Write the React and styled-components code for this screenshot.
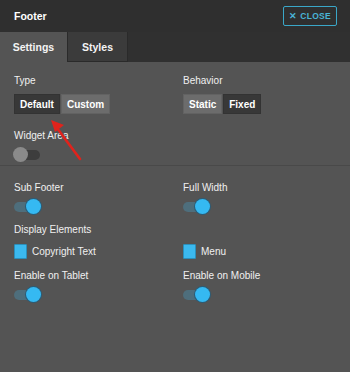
import styled, { createGlobalStyle } from 'styled-components'

const Global = createGlobalStyle`
  html, body { margin: 0; padding: 0; background: #545454; }
  body { font-family: "Liberation Sans", Arial, sans-serif; }
  * { box-sizing: border-box; }
`

const Toggle = ({ on }) => (
  <Track on={on}>
    <Knob on={on} />
  </Track>
)

const Check = ({ label }) => (
  <CheckRow>
    <Box />
    <span>{label}</span>
  </CheckRow>
)

export default () => (
  <Page>
    <Global />
    <Header>
      <Title>Footer</Title>
      <Close>✕ CLOSE</Close>
    </Header>
    <Tabs>
      <Tab active>Settings</Tab>
      <Tab>Styles</Tab>
    </Tabs>
    <Section>
      <Grid gap='16px'>
        <Field gap='7px'>
          <Label>Type</Label>
          <Group>
            <Seg dark>Default</Seg>
            <Seg>Custom</Seg>
          </Group>
        </Field>
        <Field gap='7px'>
          <Label>Behavior</Label>
          <Group>
            <Seg>Static</Seg>
            <Seg dark>Fixed</Seg>
          </Group>
        </Field>
        <Field>
          <Label>Widget Area</Label>
          <Toggle />
        </Field>
      </Grid>
    </Section>
    <Section>
      <Grid gap='9px'>
        <Field>
          <Label>Sub Footer</Label>
          <Toggle on />
        </Field>
        <Field>
          <Label>Full Width</Label>
          <Toggle on />
        </Field>
        <Field gap='7px'>
          <Label>Display Elements</Label>
          <Check label='Copyright Text' />
        </Field>
        <Field gap='7px'>
          <Label>&nbsp;</Label>
          <Check label='Menu' />
        </Field>
        <Field>
          <Label>Enable on Tablet</Label>
          <Toggle on />
        </Field>
        <Field>
          <Label>Enable on Mobile</Label>
          <Toggle on />
        </Field>
      </Grid>
    </Section>
    <Arrow width='40' height='44' viewBox='0 0 40 44'>
      <path d='M33 40 L10 9' stroke='#e0231c' strokeWidth='2.6' strokeLinecap='round' />
      <path d='M4 1 L17 6 L8 13 Z' fill='#e0231c' />
    </Arrow>
  </Page>
)

const Page = styled.div`
  position: relative;
  width: 350px;
  height: 372px;
  background: #545454;
  overflow: hidden;
`

const Header = styled.div`
  height: 32px;
  background: #2f2f2f;
  display: flex;
  align-items: center;
  justify-content: space-between;
  padding: 0 13px 0 14px;
`

const Title = styled.div`
  color: #fff;
  font-weight: bold;
  font-size: 10.5px;
`

const Close = styled.div`
  border: 1.5px solid #3aa7c8;
  border-radius: 2px;
  color: #49b4d6;
  font-size: 8.5px;
  font-weight: bold;
  letter-spacing: 0.3px;
  padding: 4px 5px;
  line-height: 10px;
`

const Tabs = styled.div`
  display: flex;
  height: 30px;
  background: #303030;
`

const Tab = styled.div`
  width: ${p => (p.active ? '67px' : '61px')};
  display: flex;
  align-items: center;
  justify-content: center;
  color: #f4f4f4;
  font-size: 10.5px;
  font-weight: bold;
  background: ${p => (p.active ? '#545454' : '#3b3b3b')};
  border-right: ${p => (p.active ? 'none' : '1px solid #2a2a2a')};
  border-left: ${p => (p.active ? 'none' : '1px solid #2a2a2a')};
  border-bottom: ${p => (p.active ? 'none' : '1px solid #2a2a2a')};
`

const Section = styled.div`
  padding: 13px 14px 2px;
  border-bottom: 1px solid #494949;
  &:last-of-type { border-bottom: none; }
  & + & { padding-top: 16px; }
`

const Grid = styled.div`
  display: grid;
  grid-template-columns: 169px 1fr;
  row-gap: ${p => p.gap};
`

const Field = styled.div`
  display: flex;
  flex-direction: column;
  align-items: flex-start;
  gap: ${p => p.gap || '5px'};
`

const Label = styled.div`
  color: #f0f0f0;
  font-size: 10px;
  line-height: 12px;
`

const Group = styled.div`
  display: flex;
  gap: 1px;
`

const Seg = styled.div`
  padding: 0 5px;
  height: 20px;
  display: flex;
  align-items: center;
  font-size: 10px;
  color: #fff;
  font-weight: bold;
  background: ${p => (p.dark ? '#383838' : '#6c6c6c')};
  border: 1px solid ${p => (p.dark ? '#333' : '#626262')};
`

const Track = styled.div`
  position: relative;
  width: 26px;
  height: 10px;
  margin: 3px 0;
  border-radius: 5px;
  background: ${p => (p.on ? '#4e6e7c' : '#3d3d3d')};
`

const Knob = styled.div`
  position: absolute;
  top: -3px;
  left: ${p => (p.on ? '12px' : '-1px')};
  width: 15px;
  height: 15px;
  border-radius: 50%;
  background: ${p => (p.on ? '#35b9f2' : '#8a8a8a')};
  box-shadow: 0 0 0 1px ${p => (p.on ? '#2a5d78' : 'transparent')};
`

const CheckRow = styled.div`
  display: flex;
  align-items: center;
  gap: 5px;
  height: 16px;
  margin-bottom: 2px;
  color: #f0f0f0;
  font-size: 10px;
`

const Box = styled.div`
  width: 13px;
  height: 15px;
  border-radius: 1px;
  background: #3bb9ef;
  border: 1px solid #2c8fbb;
`

const Arrow = styled.svg`
  position: absolute;
  left: 47px;
  top: 119px;
`
